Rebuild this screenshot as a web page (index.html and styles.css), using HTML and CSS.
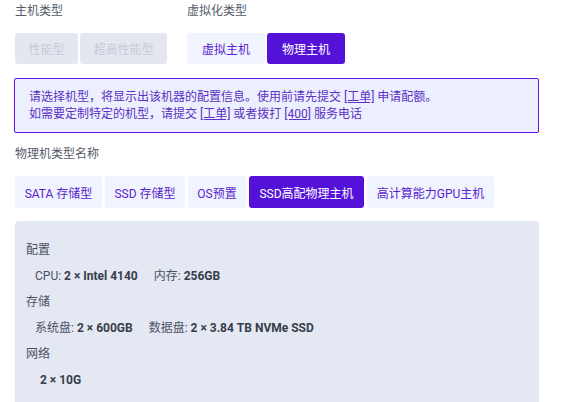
FILE: index.html
```html
<!DOCTYPE html>
<html lang="zh">
<head>
<meta charset="utf-8">
<link rel="stylesheet" href="styles.css">
</head>
<body>
<div class="page">
  <div class="top-row">
    <div class="group group-host">
      <div class="label">主机类型</div>
      <div class="btns">
        <span class="btn disabled">性能型</span>
        <span class="btn disabled">超高性能型</span>
      </div>
    </div>
    <div class="group">
      <div class="label">虚拟化类型</div>
      <div class="btns">
        <span class="btn light">虚拟主机</span>
        <span class="btn active">物理主机</span>
      </div>
    </div>
  </div>

  <div class="notice">
    <div>请选择机型，将显示出该机器的配置信息。使用前请先提交 <a class="link">[工单]</a> 申请配额。</div>
    <div>如需要定制特定的机型，请提交 <a class="link">[工单]</a> 或者拨打 <a class="link">[400]</a> 服务电话</div>
  </div>

  <div class="label label-sub">物理机类型名称</div>
  <div class="tabs">
    <span class="btn tab light">SATA 存储型</span>
    <span class="btn tab light">SSD 存储型</span>
    <span class="btn tab light">OS预置</span>
    <span class="btn tab active">SSD高配物理主机</span>
    <span class="btn tab light">高计算能力GPU主机</span>
  </div>

  <div class="panel">
    <div class="row head">配置</div>
    <div class="row item"><span class="k">CPU:</span> <b>2 × Intel 4140</b><span class="sp"></span><span class="k">内存:</span> <b>256GB</b></div>
    <div class="row head">存储</div>
    <div class="row item"><span class="k">系统盘:</span> <b>2 × 600GB</b><span class="sp"></span><span class="k">数据盘:</span> <b>2 × 3.84 TB NVMe SSD</b></div>
    <div class="row head">网络</div>
    <div class="row item item-net"><b>2 × 10G</b></div>
  </div>
</div>
</body>
</html>
```

FILE: styles.css
```css
* { box-sizing: border-box; }
html, body { margin: 0; padding: 0; background: #ffffff; }
body {
  font-family: Roboto, "Noto Sans CJK SC", "Noto Sans", sans-serif;
  font-size: 12px;
  color: #4b5263;
}
.page {
  width: 540px;
  padding: 1px 0 0 14px;
}
.top-row {
  display: flex;
  gap: 20px;
  padding-left: 1px;
}
.group-host { width: 152px; }
.label {
  line-height: 20px;
  color: #555b66;
}
.btns {
  display: flex;
  gap: 2px;
  margin-top: 12px;
}
.btn {
  display: inline-flex;
  align-items: center;
  justify-content: center;
  height: 31px;
  padding: 0 12px;
  border-radius: 3px;
  white-space: nowrap;
}
.group-host .btn:first-child { width: 63px; }
.group-host .btn:last-child { width: 87px; }
.group .btn.light, .group .btn.active { width: 78px; }
.disabled {
  background: #e4e7f0;
  color: #c6cad7;
}
.light {
  background: #f0f4fe;
  color: #5a22cf;
}
.active {
  background: #5412d9;
  color: #ffffff;
}
.notice {
  margin-top: 14px;
  width: 525px;
  border: 1px solid #6414e4;
  border-radius: 2px;
  background: #eceffd;
  color: #5b31c6;
  padding: 10px 14px 9px;
  line-height: 17px;
}
.link {
  color: #5b31c6;
  text-decoration: underline;
}
.label-sub {
  margin-top: 11px;
  padding-left: 1px;
}
.tabs {
  display: flex;
  gap: 3px;
  margin-top: 12px;
  padding-left: 1px;
}
.tab {
  height: 32px;
  padding: 0 10px;
}
.tab:nth-child(1) { width: 87px; }
.tab:nth-child(2) { width: 80px; }
.tab:nth-child(3) { width: 58px; }
.tab:nth-child(4) { width: 115px; }
.tab:nth-child(5) { width: 127px; }
.panel {
  margin: 13px 0 0 1px;
  width: 524px;
  background: #e4e8f2;
  border-radius: 4px;
  padding: 16px 11px 20px;
}
.row {
  line-height: 26px;
  white-space: nowrap;
}
.head { color: #4b5263; }
.item { padding-left: 9px; color: #4b5263; }
.item-net { padding-left: 14px; }
.item b {
  font-weight: 700;
  color: #363d4b;
}
.sp { display: inline-block; width: 16px; }
```
